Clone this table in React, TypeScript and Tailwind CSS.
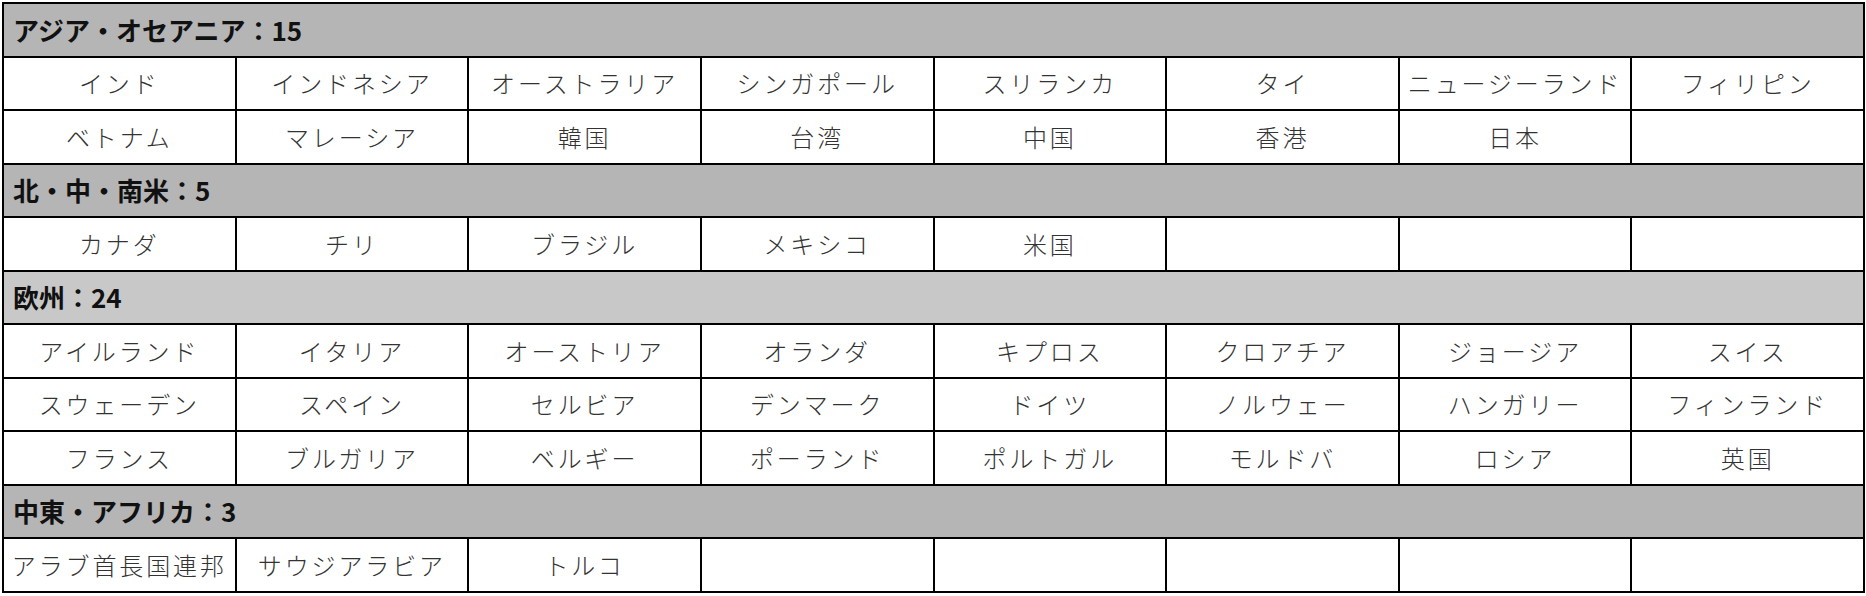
import React from 'react';

interface Region {
  title: string;
  bg: string;
  countries: string[];
}

const regions: Region[] = [
  {
    title: 'アジア・オセアニア：15',
    bg: 'bg-[#b5b5b5]',
    countries: [
      'インド', 'インドネシア', 'オーストラリア', 'シンガポール', 'スリランカ', 'タイ', 'ニュージーランド', 'フィリピン',
      'ベトナム', 'マレーシア', '韓国', '台湾', '中国', '香港', '日本',
    ],
  },
  {
    title: '北・中・南米：5',
    bg: 'bg-[#b5b5b5]',
    countries: ['カナダ', 'チリ', 'ブラジル', 'メキシコ', '米国'],
  },
  {
    title: '欧州：24',
    bg: 'bg-[#c8c8c8]',
    countries: [
      'アイルランド', 'イタリア', 'オーストリア', 'オランダ', 'キプロス', 'クロアチア', 'ジョージア', 'スイス',
      'スウェーデン', 'スペイン', 'セルビア', 'デンマーク', 'ドイツ', 'ノルウェー', 'ハンガリー', 'フィンランド',
      'フランス', 'ブルガリア', 'ベルギー', 'ポーランド', 'ポルトガル', 'モルドバ', 'ロシア', '英国',
    ],
  },
  {
    title: '中東・アフリカ：3',
    bg: 'bg-[#b5b5b5]',
    countries: ['アラブ首長国連邦', 'サウジアラビア', 'トルコ'],
  },
];

// 8列に揃えるため空セルで埋める
function padCells(list: string[]) {
  const rest = list.length % 8;
  return rest === 0 ? list : [...list, ...Array(8 - rest).fill('')];
}

export default function App() {
  return (
    <div className="w-[1866px] h-[596px] bg-white pt-[2px] pl-[2px] font-['Noto_Sans_CJK_JP',sans-serif]">
      <div className="w-[1863px] border-t-2 border-l-2 border-black">
        {regions.map((region) => (
          <div key={region.title}>
            <div
              className={`h-[53.5px] flex items-center pl-[9px] border-r-2 border-b-2 border-black ${region.bg} text-[26px] font-bold text-[#111] leading-none`}
            >
              {region.title}
            </div>
            <div className="grid grid-cols-8">
              {padCells(region.countries).map((name, i) => (
                <div
                  key={i}
                  className="h-[53.5px] flex items-center justify-center border-r-2 border-b-2 border-black text-[24px] font-light text-[#333] tracking-[0.12em] leading-none whitespace-nowrap"
                >
                  {name}
                </div>
              ))}
            </div>
          </div>
        ))}
      </div>
    </div>
  );
}
